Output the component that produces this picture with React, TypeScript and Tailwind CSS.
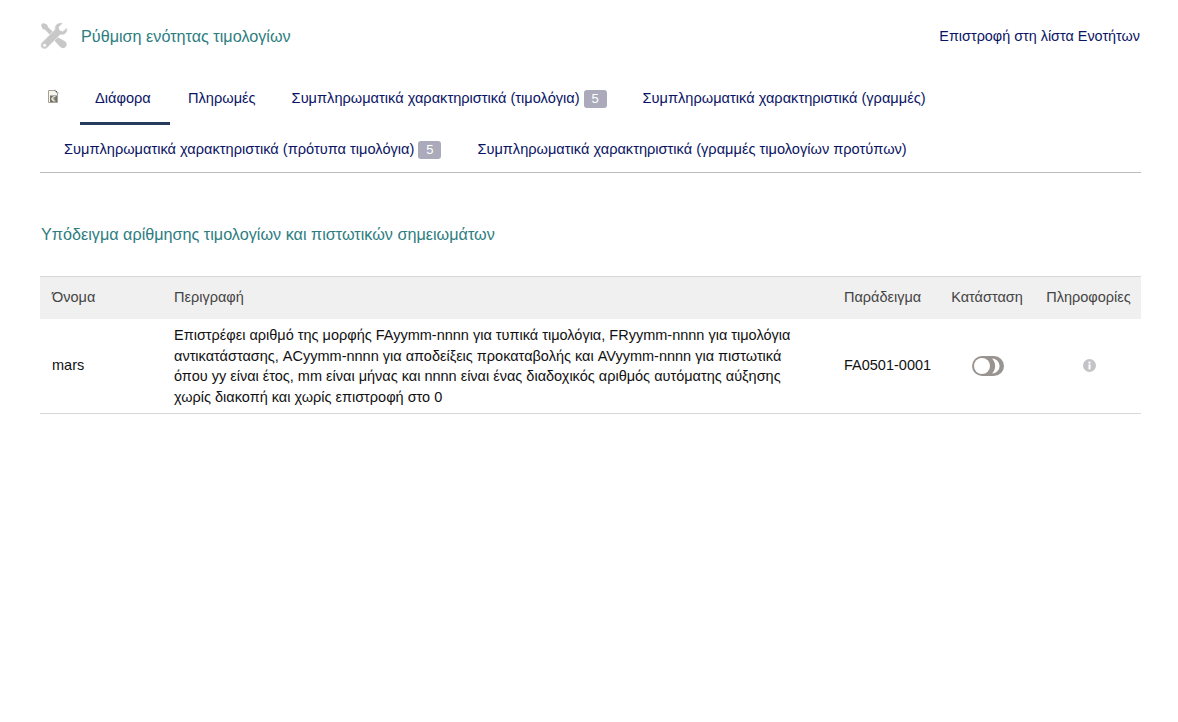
import React from "react";

const Badge = ({ n }: { n: number }) => (
  <span className="ml-1 inline-block h-[18px] w-[23px] rounded-[3px] bg-[#aaaabb] text-center text-[13px] leading-[18px] text-white">
    {n}
  </span>
);

const Tab = ({ label, badge, active, second }: { label: string; badge?: number; active?: boolean; second?: boolean }) => (
  <div
    className={
      "flex items-center px-[15px] text-[14.6px] text-[#0a1464] border-b-[3px] " +
      (second ? "h-[47px] pt-[6px] " : "h-[52px] pt-[2px] ") +
      (active ? "mr-[3px] w-[90px] border-[#263c5c]" : "mr-[6px] border-transparent")
    }
  >
    <span>{label}</span>
    {badge ? <Badge n={badge} /> : null}
  </div>
);

const ToolsIcon = () => (
  <svg width="28" height="28" viewBox="0 0 28 28" fill="#c8c8c8" stroke="none">
    <path d="M3 1 L1 3 L2.6 7 L5.4 8 L10.5 13.4 L13.6 10.4 L8.2 5.2 L7 2.6 Z" />
    <path d="M16.4 14.6 L13.4 17.6 L20 24.8 C21.6 26.5 24.2 26.6 25.7 25 C27.2 23.4 27 21 25.4 19.6 Z" />
    <path
      d="M20.6 .8 C17 .8 14.6 3.6 14.8 6.6 C14.9 7.4 14.6 7.9 14.2 8.3 L1.8 20.6 C.3 22.2 .3 24.4 1.7 25.9 C3.2 27.4 5.6 27.4 7.2 25.9 L19.6 13.4 C20.2 12.9 20.9 12.8 21.6 12.9 C25 13.2 27.6 10.4 27.3 6.8 C27.2 6 26.8 5.8 26.2 6.3 L22.8 9.2 L19.6 8 L18.9 5 L22.3 1.9 C22.8 1.3 22.5 .8 21.6 .8 Z"
      stroke="#ffffff"
      strokeWidth=".6"
    />
    <circle cx="4.6" cy="23.2" r="1.5" fill="#ffffff" />
  </svg>
);

const BillIcon = () => (
  <svg width="12" height="15" viewBox="0 0 12 15">
    <path d="M1.5 1.5 H7.5 L10.5 4.5 V13.5 H1.5 Z" fill="#f6f5ee" stroke="#a5a397" strokeWidth="1" />
    <path d="M8 .8 V1.8 M9.5 2 V3 M10.8 3.4 V4.4" stroke="#55534c" strokeWidth="1" />
    <rect x="3" y="6.5" width="7" height="6.5" fill="#77736a" />
    <path d="M8.4 7.6 C6.4 7.4 5.2 8.4 5.2 9.8 C5.2 11.2 6.4 12.2 8.4 12" fill="none" stroke="#ecebe1" strokeWidth="1.1" />
    <path d="M4.2 9.2 H7.4 M4.2 10.5 H7.4" stroke="#ecebe1" strokeWidth="0.7" />
  </svg>
);

const Toggle = () => (
  <svg width="34" height="22" viewBox="0 0 34 22">
    <rect x="1" y="1" width="32" height="20" rx="10" fill="#999490" />
    <circle cx="11" cy="11" r="8" fill="#ffffff" />
    <path d="M21 3.4 A7.6 7.6 0 0 1 21 18.6 A10.8 10.8 0 0 0 21 3.4 Z" fill="#ffffff" />
  </svg>
);

const InfoIcon = () => (
  <svg width="13" height="13" viewBox="0 0 13 13">
    <circle cx="6.5" cy="6.5" r="6.5" fill="#c4c4c8" />
    <rect x="5.5" y="2.6" width="2" height="2" fill="#ffffff" />
    <rect x="5.5" y="5.4" width="2" height="5" fill="#ffffff" />
  </svg>
);

export default function App() {
  return (
    <div className="min-h-[722px] bg-white px-[40px] pt-[21px] pr-[37px] font-['Liberation_Sans',Arial,sans-serif] text-[14.5px] text-[#111]">
      <div className="flex h-[30px] items-center justify-between pr-[1px]">
        <div className="flex items-center">
          <ToolsIcon />
          <span className="ml-[13px] text-[16.2px] text-[#2d7d7f]">Ρύθμιση ενότητας τιμολογίων</span>
        </div>
        <span className="mt-[1px] text-[14.4px] text-[#0a1464]">Επιστροφή στη λίστα Ενοτήτων</span>
      </div>

      <div className="mt-[22px] border-b border-[#bbbbbb]">
        <div className="flex">
          <div className="w-[40px] pl-[7px] pt-[16px]">
            <BillIcon />
          </div>
          <Tab label="Διάφορα" active />
          <Tab label="Πληρωμές" />
          <Tab label="Συμπληρωματικά χαρακτηριστικά (τιμολόγια)" badge={5} />
          <Tab label="Συμπληρωματικά χαρακτηριστικά (γραμμές)" />
        </div>
        <div className="flex pl-[9px]">
          <Tab second label="Συμπληρωματικά χαρακτηριστικά (πρότυπα τιμολόγια)" badge={5} />
          <Tab second label="Συμπληρωματικά χαρακτηριστικά (γραμμές τιμολογίων προτύπων)" />
        </div>
      </div>

      <div className="mt-[51px] pl-[1px] text-[16.2px] leading-[20px] text-[#2d7d7f]">
        Υπόδειγμα αρίθμησης τιμολογίων και πιστωτικών σημειωμάτων
      </div>

      <table className="mt-[32px] w-full border-collapse">
        <thead>
          <tr className="h-[42px] border-t border-[#d8d8d8] bg-[#f0f0f0] text-left text-[#444]">
            <th className="w-[122px] pl-[12px] font-normal">Όνομα</th>
            <th className="w-[670px] pl-[12px] font-normal">Περιγραφή</th>
            <th className="w-[108px] pl-[12px] font-normal">Παράδειγμα</th>
            <th className="w-[92px] pl-[2px] text-center font-normal">Κατάσταση</th>
            <th className="pl-[4px] text-center font-normal">Πληροφορίες</th>
          </tr>
        </thead>
        <tbody>
          <tr className="h-[95px] border-b border-[#d8d8d8]">
            <td className="pl-[12px]">mars</td>
            <td className="pl-[12px] pr-[30px] pt-[1px] leading-[20.5px]">
              Επιστρέφει αριθμό της μορφής FAyymm-nnnn για τυπικά τιμολόγια, FRyymm-nnnn για τιμολόγια
              αντικατάστασης, ACyymm-nnnn για αποδείξεις προκαταβολής και AVyymm-nnnn για πιστωτικά
              όπου yy είναι έτος, mm είναι μήνας και nnnn είναι ένας διαδοχικός αριθμός αυτόματης αύξησης
              χωρίς διακοπή και χωρίς επιστροφή στο 0
            </td>
            <td className="pl-[12px]">FA0501-0001</td>
            <td>
              <div className="flex justify-center pl-[3px]"><Toggle /></div>
            </td>
            <td>
              <div className="flex justify-center pl-[6px]"><InfoIcon /></div>
            </td>
          </tr>
        </tbody>
      </table>
    </div>
  );
}
